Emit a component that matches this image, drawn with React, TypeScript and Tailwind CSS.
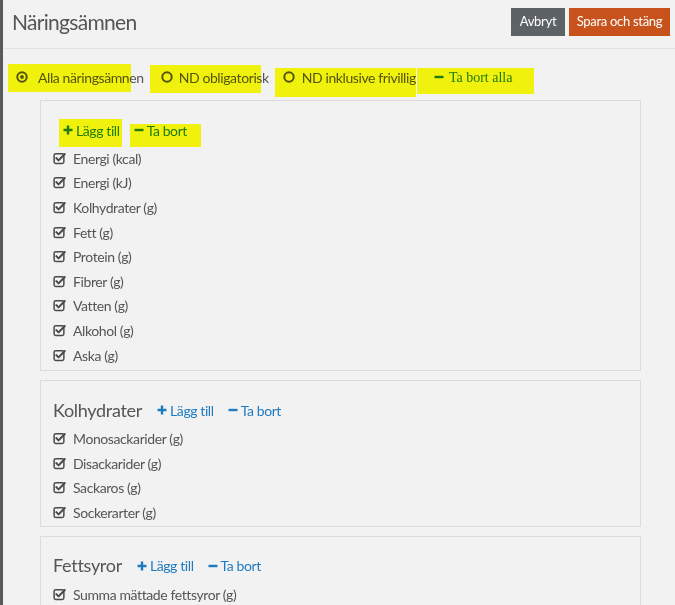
import React from "react";

const font = { fontFamily: "Lato, 'Open Sans', sans-serif" };

const CheckIcon = () => (
  <svg viewBox="0 0 14 14" className="w-[13px] h-[13px] shrink-0">
    <rect x="1.2" y="1.8" width="10.5" height="10.5" rx="1.8" fill="none" stroke="#4a4a4a" strokeWidth="1.6" />
    <path d="M3.6 6.6 L6 9 L12.6 2.2" fill="none" stroke="#4a4a4a" strokeWidth="2.2" strokeLinecap="round" strokeLinejoin="round" />
  </svg>
);

const Radio = ({ checked }: { checked?: boolean }) => (
  <svg viewBox="0 0 12 12" className="w-[12px] h-[12px] shrink-0">
    <circle cx="6" cy="6" r="4.7" fill="none" stroke="#555" strokeWidth="2" />
    {checked && <circle cx="6" cy="6" r="1.9" fill="#555" />}
  </svg>
);

const Plus = () => (
  <svg viewBox="0 0 10 10" className="w-[10px] h-[10px] shrink-0">
    <path d="M5 0.5 V9.5 M0.5 5 H9.5" stroke="currentColor" strokeWidth="2.4" />
  </svg>
);

const Minus = () => (
  <svg viewBox="0 0 10 10" className="w-[10px] h-[10px] shrink-0">
    <path d="M0.5 5 H9.5" stroke="currentColor" strokeWidth="2.4" />
  </svg>
);

// yellow marker stroke drawn on top of the screenshot
const Marker = ({ className }: { className: string }) => (
  <span className={`absolute bg-[#fdff0e] mix-blend-multiply pointer-events-none ${className}`} />
);

const Item = ({ label }: { label: string }) => (
  <li className="flex items-center gap-[7px] h-[24.6px] text-[14px] tracking-[-0.4px] text-[#555]">
    <CheckIcon />
    <span>{label}</span>
  </li>
);

const Links = () => (
  <>
    <span className="flex items-center gap-[3px] text-[#1f7bbf]">
      <Plus />
      Lägg till
    </span>
    <span className="flex items-center gap-[3px] text-[#1f7bbf]">
      <Minus />
      Ta bort
    </span>
  </>
);

const groups = [
  { title: "Kolhydrater", items: ["Monosackarider (g)", "Disackarider (g)", "Sackaros (g)", "Sockerarter (g)"] },
  { title: "Fettsyror", items: ["Summa mättade fettsyror (g)"] },
];

export default function App() {
  return (
    <div className="w-[675px] h-[605px] overflow-hidden flex bg-[#f2f2f2]" style={font}>
      <div className="w-[3px] shrink-0 bg-[#5a5a5a]" />
      <div className="flex-1 flex flex-col min-h-0">
        {/* header */}
        <div className="shrink-0 h-[49px] flex items-center justify-between pl-[9px] pr-[5px] border-b border-[#e2e2e2]">
          <h1 className="text-[21px] text-[#555] tracking-[-0.7px] -mt-[4px]">Näringsämnen</h1>
          <div className="flex gap-[4px] -mt-[5px]">
            <button className="h-[28px] w-[54px] bg-[#5d6266] text-white text-[13px] tracking-[-0.3px]">Avbryt</button>
            <button className="h-[28px] w-[101px] bg-[#c8521c] text-white text-[13px] tracking-[-0.3px]">Spara och stäng</button>
          </div>
        </div>

        {/* filter row */}
        <div className="shrink-0 h-[51px] pt-[5px] flex items-center text-[14px] tracking-[-0.4px] text-[#555] pl-[13px]">
          <span className="relative flex items-center gap-[10px]">
            <Marker className="-left-[8px] right-[13px] -top-[3px] -bottom-[4px]" />
            <Radio checked />
            Alla näringsämnen
          </span>
          <span className="relative flex items-center gap-[6px] ml-[17px]">
            <Marker className="-left-[11px] right-[8px] -top-[2px] -bottom-[5px]" />
            <Radio />
            ND obligatorisk
          </span>
          <span className="relative flex items-center gap-[7px] ml-[14px]">
            <Marker className="-left-[8px] right-[0px] top-[1px] -bottom-[9px]" />
            <Radio />
            ND inklusive frivillig
          </span>
          <span className="relative flex items-center gap-[5px] ml-[18px] text-[#1f7bbf] text-[14px] tracking-normal" style={{ fontFamily: "'Liberation Serif', serif" }}>
            <Marker className="-left-[17px] -right-[22px] top-[1px] -bottom-[6px]" />
            <Minus />
            Ta bort alla
          </span>
        </div>

        {/* groups */}
        <div className="shrink-0 flex flex-col gap-[9px] ml-[37px] mr-[34px]">
          <div className="border border-[#dcdcdc] pt-[16px] pb-[3px] px-[12px]">
            <div className="h-[26px] flex items-center gap-[14px] pl-[10px] text-[14px] tracking-[-0.4px]">
              <span className="relative flex items-center gap-[3px] text-[#1f7bbf]">
                <Marker className="-left-[4px] -right-[2px] -top-[1px] -bottom-[6px]" />
                <Plus />
                Lägg till
              </span>
              <span className="relative flex items-center gap-[3px] text-[#1f7bbf]">
                <Marker className="-left-[4px] -right-[14px] top-[4px] -bottom-[6px]" />
                <Minus />
                Ta bort
              </span>
            </div>
            <ul className="mt-[3px]">
              {["Energi (kcal)", "Energi (kJ)", "Kolhydrater (g)", "Fett (g)", "Protein (g)", "Fibrer (g)", "Vatten (g)", "Alkohol (g)", "Aska (g)"].map((l) => (
                <Item key={l} label={l} />
              ))}
            </ul>
          </div>

          {groups.map((g) => (
            <div key={g.title} className="border border-[#dcdcdc] pt-[15px] pb-[1px] px-[12px]">
              <div className="h-[28px] flex items-center gap-[14px] text-[14px] tracking-[-0.4px]">
                <span className="text-[18px] text-[#555] tracking-[-0.3px] mr-[1px]">{g.title}</span>
                <Links />
              </div>
              <ul className="mt-[2px]">
                {g.items.map((l) => (
                  <Item key={l} label={l} />
                ))}
              </ul>
            </div>
          ))}
        </div>
      </div>
    </div>
  );
}
